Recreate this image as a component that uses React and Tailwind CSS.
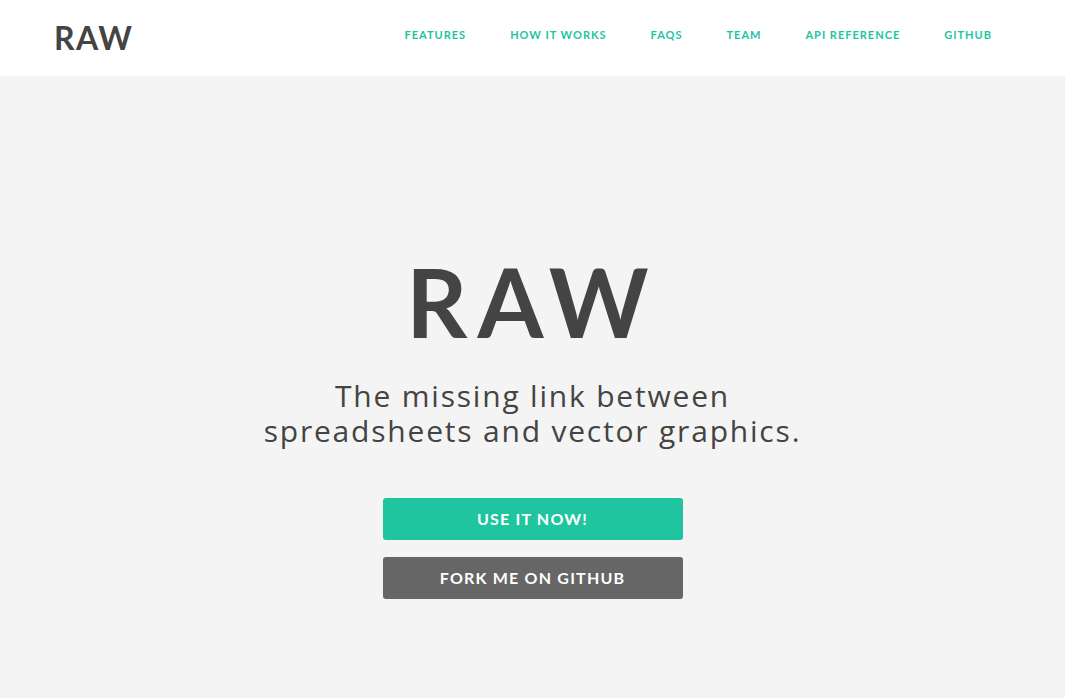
import React from 'react';

const links = ['FEATURES', 'HOW IT WORKS', 'FAQS', 'TEAM', 'API REFERENCE', 'GITHUB'];

export default function App() {
  return (
    <div className="min-h-[698px] bg-[#f4f4f4] font-['Lato',sans-serif] text-[#444]">
      {/* Top bar */}
      <header className="h-[76px] bg-white flex items-center justify-between pl-[54px] pr-[73px]">
        <a className="text-[32px] font-bold tracking-[1.5px] text-[#444] leading-none">RAW</a>
        <nav className="flex items-center gap-[44px] -mt-[6px]">
          {links.map(l => (
            <a key={l} className="text-[11px] font-bold tracking-[1px] text-[#1ec4a0]">{l}</a>
          ))}
        </nav>
      </header>

      {/* Hero */}
      <section className="flex flex-col items-center pt-[178px] pb-[99px]">
        <h1 className="text-[95px] font-bold leading-none tracking-[10px] text-[#444]">RAW</h1>
        <p className="mt-[29px] font-['Open_Sans',sans-serif] text-[30px] leading-[35px] text-center tracking-[1.8px] font-normal text-[#444]">
          <span className="block">The missing link between</span>
          <span className="block">spreadsheets and vector graphics.</span>
        </p>
        <div className="mt-[50px] flex flex-col gap-[17px]">
          <a className="w-[300px] h-[42px] rounded-[3px] bg-[#1fc59f] text-white flex items-center justify-center text-[16px] font-bold tracking-[1.2px]">USE IT NOW!</a>
          <a className="w-[300px] h-[42px] rounded-[3px] bg-[#666] text-white flex items-center justify-center text-[16px] font-bold tracking-[1.2px]">FORK ME ON GITHUB</a>
        </div>
      </section>
    </div>
  );
}
